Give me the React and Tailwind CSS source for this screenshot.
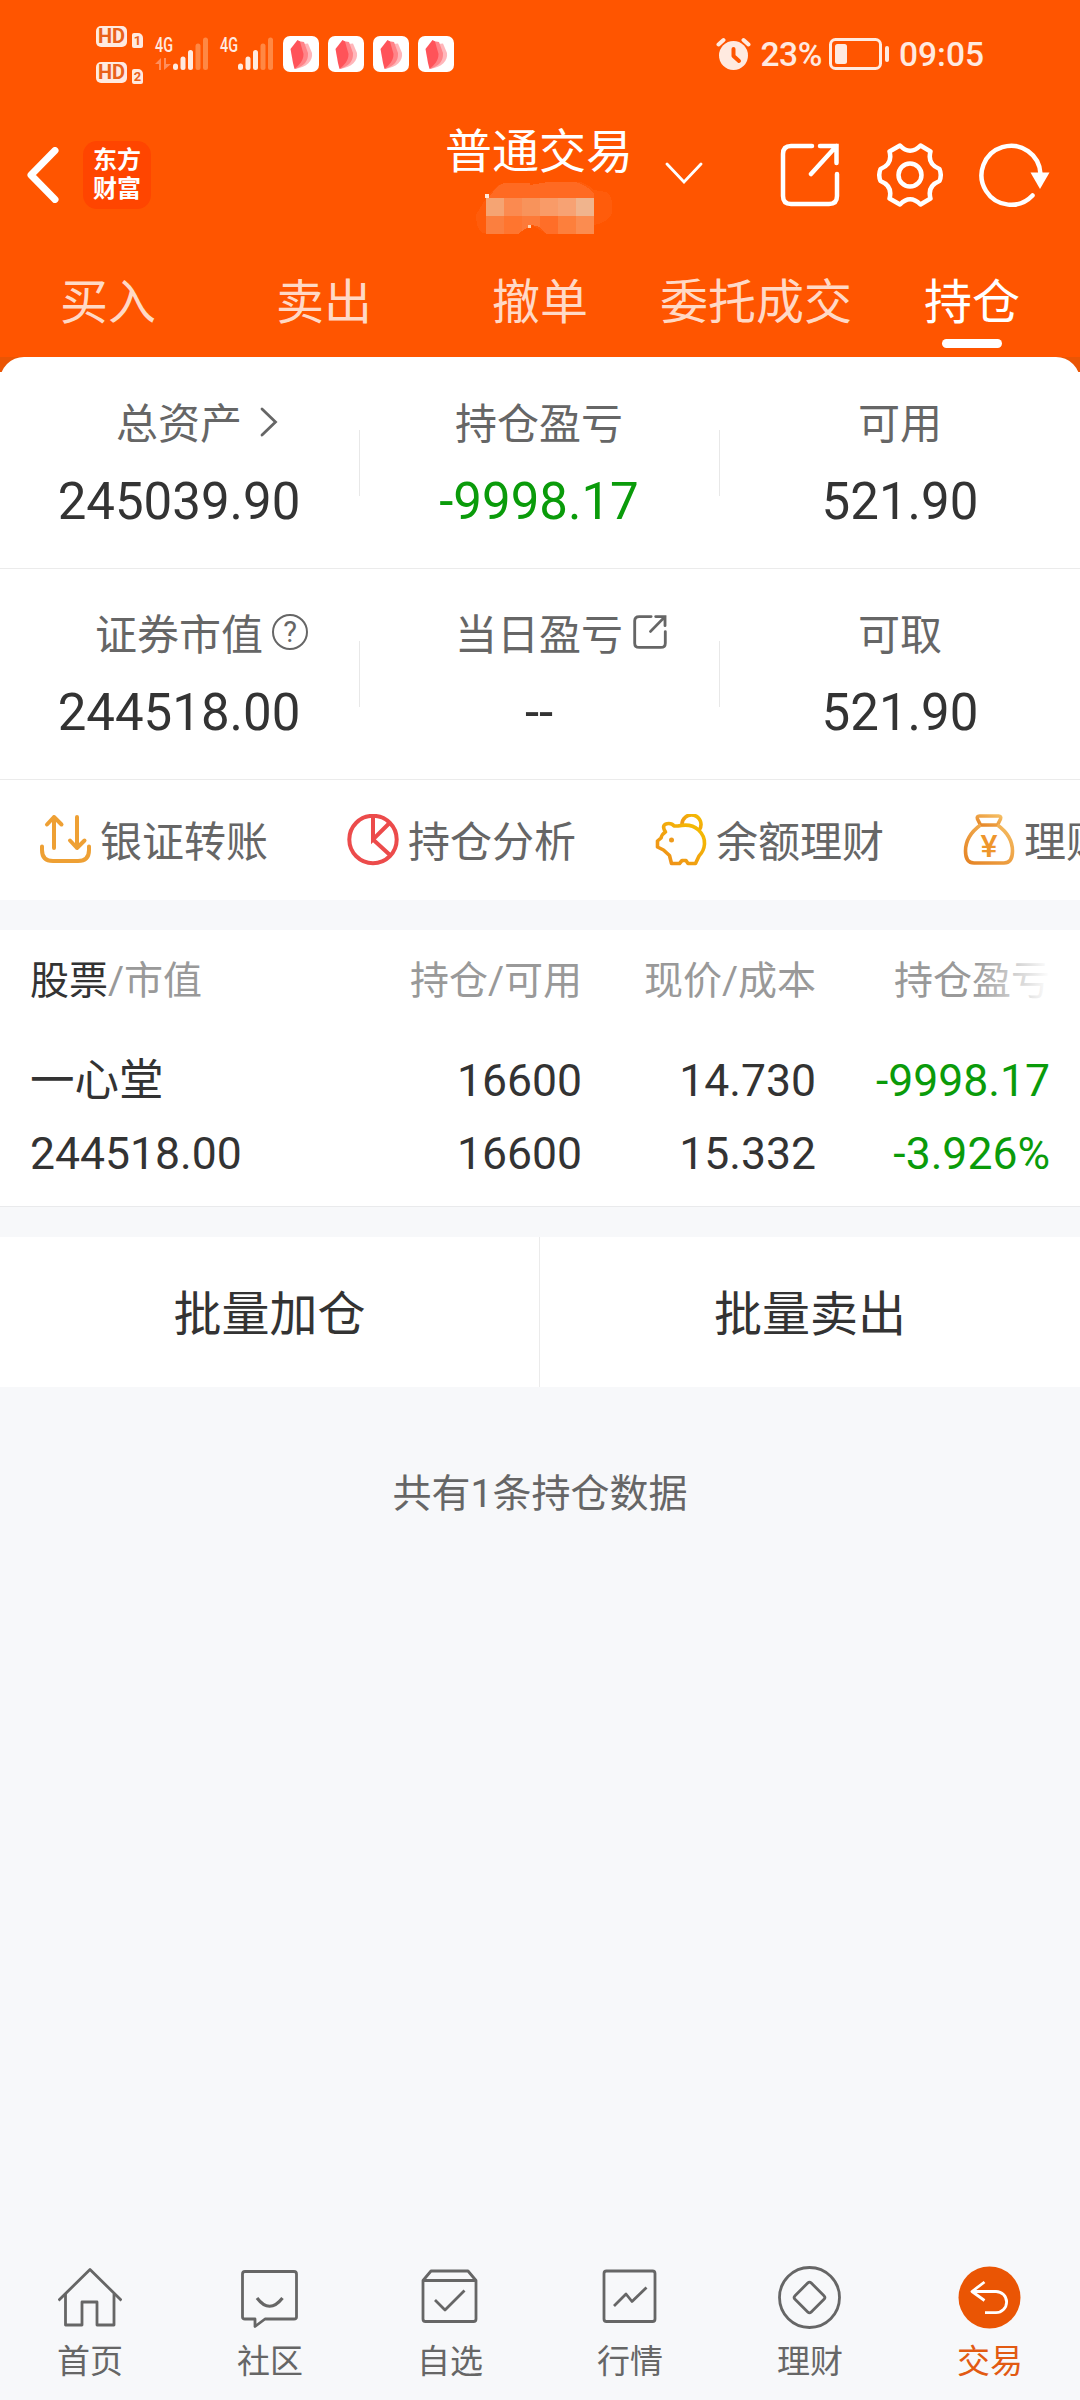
const tabs = ['买入', '卖出', '撤单', '委托成交', '持仓'];

const actions = [
  { label: '银证转账', icon: <TransferIcon /> },
  { label: '持仓分析', icon: <PieIcon /> },
  { label: '余额理财', icon: <PigIcon /> },
  { label: '理财', icon: <BagIcon /> },
];

const holdings = [
  {
    name: '一心堂', value: '244518.00',
    amount: '16600', usable: '16600',
    price: '14.730', cost: '15.332',
    profit: '-9998.17', rate: '-3.926%',
  },
];

/* ---------- status bar ---------- */

function HdBadge({ n }) {
  return (
    <div className="flex gap-[5px] h-[22px]">
      <div className="w-[31px] h-[21px] rounded-[5px] bg-[#ffeae0] text-[#e9611a] text-[20px] leading-[21px] font-bold text-center">HD</div>
      <div className="mt-[7px] w-[11px] h-[15px] rounded-[2px] rounded-tr-[5px] bg-[#ffeae0] text-[#e9611a] text-[13px] leading-[16px] font-bold text-center">{n}</div>
    </div>
  );
}

function Signal({ data }) {
  return (
    <svg className="overflow-visible" width="53" height="34" viewBox="0 0 53 34">
      <text x="0" y="15" fontSize="21" fontWeight="500" textLength="18" lengthAdjust="spacingAndGlyphs" fill="#ffeae0">4G</text>
      {data && <path d="M0 27 L6 21 V33 H4 V27 Z M9 21 H11 V27 H16 L9 33 Z" fill="#ff8f5c" />}
      <g strokeWidth="5" strokeLinecap="round" stroke="#ffeae0">
        <path d="M20.5 29 V30.500" />
        <path d="M28 22 V30.500" />
        <path d="M35.500 15.500 V30.500" />
      </g>
      <g strokeWidth="5" strokeLinecap="round" stroke="#ff8844">
        <path d="M43 9 V30.500" />
        <path d="M50.500 3 V30.500" />
      </g>
    </svg>
  );
}

function ReaderIcon() {
  return (
    <svg width="36" height="36" viewBox="0 0 36 36">
      <rect width="36" height="36" rx="7" fill="#fff" />
      <path d="M20 8 L25 7.500 L29 17 C30 25 24 31 12 33 Z" fill="#ffb6ba" />
      <path d="M15 5 L21 6 L25 17 C25.500 25 21 30 12 33 Z" fill="#ff8489" />
      <path d="M7.500 13 L14.500 4 L17 5.500 L20.500 18 C20.500 25 16 29 11.500 33 L10 27 Z" fill="#ff5359" />
    </svg>
  );
}

function StatusBar() {
  return (
    <div className="h-[108px] flex items-center justify-between pl-[96px] pr-[96px] text-[#ffeae0]">
      <div className="flex items-center">
        <div className="flex flex-col gap-[14px] mr-3 mt-[2px]">
          <HdBadge n="1" />
          <HdBadge n="2" />
        </div>
        <Signal data />
        <div className="w-3" />
        <Signal />
        <div className="flex gap-[9px] ml-[10px]">
          <ReaderIcon /><ReaderIcon /><ReaderIcon /><ReaderIcon />
        </div>
      </div>
      <div className="flex items-center text-[34px] leading-none">
        <svg width="35" height="34" viewBox="0 0 35 34" fill="none" strokeLinecap="round">
          <circle cx="17.500" cy="18.500" r="14.500" fill="currentColor" />
          <path d="M2.500 7.500 L7.500 3 M27.500 3 L32.500 7.500" stroke="currentColor" strokeWidth="4" />
          <path d="M17.500 12 V19 L23 24" stroke="#ff5500" strokeWidth="4" strokeLinejoin="round" />
        </svg>
        <span className="ml-[9px] mt-[2px] text-[33.5px] font-medium tracking-[-0.4px]">23%</span>
        <svg className="ml-[7px]" width="60" height="32" viewBox="0 0 60 32" fill="none">
          <rect x="1.500" y="1.500" width="50" height="29" rx="5" stroke="currentColor" strokeWidth="3" />
          <rect x="6" y="6" width="12" height="20" rx="2.500" fill="currentColor" />
          <rect x="56" y="8" width="4" height="16" rx="2" fill="currentColor" />
        </svg>
        <span className="ml-[10px] mt-[2px] text-[33.5px] font-medium">09:05</span>
      </div>
    </div>
  );
}

/* ---------- header ---------- */

function ShareIcon({ className, stroke }) {
  return (
    <svg className={className} viewBox="0 0 60 64" preserveAspectRatio="none" fill="none" stroke="currentColor" strokeWidth={stroke} strokeLinecap="round">
      <path d="M32 3 H11 Q3 3 3 11 V53 Q3 61 11 61 H49 Q57 61 57 53 V31" />
      <path d="M40 3 H56.500 V20 M56.500 3 L31 31" />
    </svg>
  );
}

// Account number is masked with a coarse mosaic
function MaskedAccount() {
  return (
    <svg width="136" height="54" viewBox="0 0 136 54" shapeRendering="crispEdges">
      <path d="M10 17 L20 6 Q26 1 36 2 L54 4 L72 1 H104 Q112 3 118 9 L130 11 Q136 14 136 24 V32 Q132 42 118 44 V52 H6 Q0 46 0 34 Z" fill="#ff5c0b" />
      <path d="M28 2 H54 V17 H12 L22 5 Z M72 1 H100 Q110 4 118 12 V17 H54 V4 Z" fill="#ff6a22" />
      <rect x="10" y="17" width="18" height="18" fill="#f5a473" />
      <rect x="28" y="17" width="18" height="18" fill="#fb8a50" />
      <rect x="46" y="17" width="18" height="18" fill="#f8935b" />
      <rect x="64" y="17" width="18" height="18" fill="#f99b68" />
      <rect x="82" y="17" width="18" height="18" fill="#f7a273" />
      <rect x="100" y="17" width="18" height="18" fill="#f0b48d" />
      <rect x="10" y="35" width="18" height="18" fill="#fb7f3f" />
      <path d="M28 35 H46 V50 L42 53 H28 Z" fill="#ff752f" />
      <path d="M46 35 H64 V46 L56 44 L46 50 Z" fill="#fd7a38" />
      <path d="M64 35 H82 V53 H71 L64 47 Z" fill="#ff6e28" />
      <rect x="82" y="35" width="18" height="18" fill="#fd7f3c" />
      <rect x="100" y="35" width="18" height="18" fill="#fb8c50" />
      <path d="M42 53 L56 44 L71 53 V54 H42 Z" fill="#ff5500" />
      <rect x="9" y="13" width="4" height="4" fill="#ffe9dc" />
      <rect x="52" y="44" width="3" height="3" fill="#ffd5b0" />
    </svg>
  );
}

function Header() {
  return (
    <div className="h-[134px] flex items-center text-white">
      <svg className="ml-[27px]" width="32" height="56" viewBox="0 0 32 56" fill="none" stroke="currentColor" strokeWidth="7">
        <path d="M28 3.500 L4 28 L28 52.500" strokeLinecap="round" strokeLinejoin="round" />
      </svg>
      <div className="ml-[24px] w-[68px] h-[68px] rounded-[14px] bg-[#ff4500] flex flex-col items-center justify-center text-[24px] leading-[29px] font-bold">
        <span>东方</span>
        <span>财富</span>
      </div>
      <div className="self-start ml-[290px] w-[196px] pt-4 flex flex-col items-center">
        <h1 className="text-[47px] leading-[56px]">普通交易</h1>
        <div className="mt-px ml-[10px]"><MaskedAccount /></div>
      </div>
      <svg className="ml-[28px] mb-1" width="38" height="22" viewBox="0 0 38 22" fill="none" stroke="currentColor" strokeWidth="2.800">
        <path d="M2 2 L19 20 L36 2" strokeLinecap="round" />
      </svg>
      <ShareIcon className="ml-[77px] w-[60px] h-[64px]" stroke="4.5" />
      <svg className="ml-[37px]" width="66" height="64" viewBox="0 0 66 64" fill="none" stroke="currentColor" strokeWidth="4.500" strokeLinejoin="round">
        <path d="M23 2.500 Q33 13 43.500 2.500 L53.500 8.500 Q50 21 62.500 26 Q65 32 62.500 38 Q50 43 53.500 55.500 L43.500 61.500 Q33 51 23 61.500 L12.500 55.500 Q16 43 3.500 38 Q1 32 3.500 26 Q16 21 12.500 8.500 Z" />
        <circle cx="33" cy="32" r="11.500" />
      </svg>
      <svg className="ml-[36px]" width="72" height="64" viewBox="0 0 72 64" fill="none">
        <path d="M61.500 31 A29.500 29.500 0 1 0 53.500 52.500" stroke="currentColor" strokeWidth="4.500" strokeLinecap="round" />
        <path d="M51.500 29.500 H70.500 L61 46 Z" fill="currentColor" />
      </svg>
    </div>
  );
}

function Tabs() {
  return (
    <div className="h-[115px] pt-[37px] grid grid-cols-5 text-[48px] leading-none">
      {tabs.map(t => (
        <div key={t} className={'flex flex-col items-center whitespace-nowrap ' + (t === '持仓' ? 'text-white' : 'text-[#ffd9c6]')}>
          <span>{t}</span>
          {t === '持仓' && <div className="mt-3 w-[60px] h-[9px] rounded-full bg-white" />}
        </div>
      ))}
    </div>
  );
}

/* ---------- assets ---------- */

function Stat({ label, value, icon, green, last }) {
  return (
    <div className={'relative flex flex-col items-center leading-none ' + (last ? '' : 'pr-[2px]')}>
      <div className="relative text-[42px] text-[#666]">
        {label}
        {icon && <span className="absolute left-full top-0">{icon}</span>}
      </div>
      <div className={'mt-[30px] text-[51px] ' + (green ? 'text-[#0a9b0a]' : 'text-[#333]')}>{value}</div>
      {!last && <div className="absolute right-0 top-[26px] w-px h-[66px] bg-[#e8e8e8]" />}
    </div>
  );
}

function Assets() {
  return (
    <div className="bg-white">
      {/* darker strip shows behind the rounded corners */}
      <div className="h-[15px] overflow-hidden bg-[#ea5504]">
        <div className="h-[60px] rounded-t-[24px] bg-white" />
      </div>
      <div className="h-[197px] pt-8 grid grid-cols-3 border-b border-[#ebebeb]">
        <Stat label="总资产" value="245039.90" icon={
          <svg className="ml-[18px] mt-[3px]" width="18" height="30" viewBox="0 0 18 30" fill="none" stroke="#666" strokeWidth="2.800" strokeLinecap="round">
            <path d="M2 2 L15.500 15 L2 28" />
          </svg>
        } />
        <Stat label="持仓盈亏" value="-9998.17" green />
        <Stat label="可用" value="521.90" last />
      </div>
      <div className="h-[211px] pt-[46px] grid grid-cols-3 border-b border-[#ebebeb]">
        <Stat label="证券市值" value="244518.00" icon={
          <span className="block ml-[9px] -mt-px w-[36px] h-[36px] rounded-full border-[2.5px] border-[#666] text-[29px] leading-[33px] text-center">?</span>
        } />
        <Stat label="当日盈亏" value="--" icon={<ShareIcon className="ml-[10px] w-[34px] h-[34px]" stroke="5" />} />
        <Stat label="可取" value="521.90" last />
      </div>
    </div>
  );
}

function TransferIcon() {
  return (
    <svg width="52" height="52" viewBox="0 0 52 52" fill="none" stroke="#eea034" strokeWidth="4" strokeLinecap="round" strokeLinejoin="round">
      <path d="M15 34 V3 M8 10.500 L15 3 L22.500 10.500" />
      <path d="M38 3 V34 M31 26.500 L38 34 L45.500 26.500" />
      <path d="M3 32.500 V36 Q3 47 14 47 H39 Q50 47 50 36 V32.500" />
    </svg>
  );
}

function PieIcon() {
  return (
    <svg width="52" height="52" viewBox="0 0 52 52" fill="none" stroke="#ec4b4b" strokeWidth="4">
      <circle cx="26" cy="25.500" r="23.700" />
      <path d="M26 2 V25.500 L42 9.500 M26 25.500 L43.500 41.500" />
    </svg>
  );
}

function PigIcon() {
  return (
    <svg width="52" height="52" viewBox="0 0 52 52" fill="none" stroke="url(#pig)" strokeWidth="3.600" strokeLinejoin="round" strokeLinecap="round">
      <defs>
        <linearGradient id="pig" x1="1" y1="0" x2="0" y2="1">
          <stop offset="0" stopColor="#f5c000" />
          <stop offset="1" stopColor="#ee8c1c" />
        </linearGradient>
      </defs>
      <path d="M27 11 A9.500 9.500 0 1 1 44.500 15.500" />
      <path d="M23 12 Q36 9 43.500 16 Q50 22 49.500 30 Q49 37 44 42 L40.500 49.500 H33 L31 46.500 H27 L24.500 49.500 H16.500 L14.500 41.500 L8.500 36 L2.500 33 V27 L6 24 Q7 20 10.500 18 Q6 11 12 9.700 Q17 9 19 12 Z" />
      <circle cx="16.500" cy="26" r="2.500" fill="#ee9a1c" stroke="none" />
    </svg>
  );
}

function BagIcon() {
  return (
    <svg width="52" height="52" viewBox="0 0 52 52" fill="none" stroke="url(#bag)" strokeWidth="3.600" strokeLinejoin="round">
      <defs>
        <linearGradient id="bag" x1="1" y1="0" x2="0" y2="1">
          <stop offset="0" stopColor="#f5bd62" />
          <stop offset="1" stopColor="#e58324" />
        </linearGradient>
      </defs>
      <path d="M17.500 11 L14.500 5 Q13.500 2 16.500 2 H35.500 Q38.500 2 37.500 5 L34.500 11 Z" />
      <path d="M17.500 11 Q2.500 22 2.500 37 Q2.500 49 11 49 H41 Q49.500 49 49.500 37 Q49.500 22 34.500 11" />
      <text x="26" y="42.500" fontSize="32" fontWeight="500" textAnchor="middle" fill="#ee962c" stroke="none">¥</text>
    </svg>
  );
}

function Actions() {
  return (
    <div className="h-[120px] pl-[39px] flex items-center overflow-hidden bg-white">
      {actions.map(a => (
        <div key={a.label} className="w-[308px] shrink-0 flex items-center whitespace-nowrap">
          {a.icon}
          <span className="ml-[9px] mt-[5px] text-[42px] leading-none text-[#666]">{a.label}</span>
        </div>
      ))}
    </div>
  );
}

/* ---------- holdings ---------- */

function Holdings() {
  return (
    <div className="bg-white px-[30px] pt-8 pb-[29px] border-b border-[#e9eaec] leading-none text-[#333]">
      <div className="grid grid-cols-[318px_234px_234px_234px] text-right text-[39px] text-[#999]">
        <div className="text-left"><span className="text-[#333]">股票</span>/市值</div>
        <div>持仓/可用</div>
        <div>现价/成本</div>
        <div className="relative">
          持仓盈亏
          <div className="absolute right-0 top-0 w-[76px] h-full bg-gradient-to-r from-white/0 to-white" />
        </div>
      </div>
      {holdings.map(h => (
        <div key={h.name} className="mt-[58px] grid grid-cols-[318px_234px_234px_234px] auto-rows-[45px] gap-y-[28px] text-right text-[44.5px] leading-[45px]">
          <div className="text-left">{h.name}</div>
          <div>{h.amount}</div>
          <div>{h.price}</div>
          <div className="text-[#0a9b0a]">{h.profit}</div>
          <div className="text-left">{h.value}</div>
          <div>{h.usable}</div>
          <div>{h.cost}</div>
          <div className="text-[#0a9b0a]">{h.rate}</div>
        </div>
      ))}
    </div>
  );
}

/* ---------- bottom navigation ---------- */

function NavItem({ label, active, children }) {
  return (
    <div className={'flex flex-col items-center ' + (active ? 'text-[#e25a12]' : 'text-[#666]')}>
      <svg width="64" height="66" viewBox="0 0 64 66" fill="none" stroke="currentColor" strokeWidth="2.800" strokeLinejoin="round">
        {children}
      </svg>
      <span className="mt-[15px] text-[33px] leading-none">{label}</span>
    </div>
  );
}

function BottomNav() {
  return (
    <div className="mt-auto h-[136px] grid grid-cols-6">
      <NavItem label="首页">
        <path d="M0.500 36.500 L32 5.500 L63.500 36.500" />
        <path d="M7.500 30 V61 H24 V38 H39 V61 H56 V30" />
      </NavItem>
      <NavItem label="社区">
        <path d="M7 7.500 H56 Q58.500 7.500 58.500 10 V53 Q58.500 55 56 55 H27 L17 62.500 V55 H7 Q4.500 55 4.500 53 V10 Q4.500 7.500 7 7.500 Z" />
        <path d="M19 34 Q31.500 50.500 44.500 34" strokeWidth="3.200" />
      </NavItem>
      <NavItem label="自选">
        <path d="M5 16.500 L13 7 H50 L58 16.500 V55 Q58 57.500 55.500 57.500 H7.500 Q5 57.500 5 55 Z M5 16.500 H58" />
        <path d="M17 36 L27 46 L46.500 26.500" />
      </NavItem>
      <NavItem label="行情">
        <rect x="6" y="7" width="51" height="50.500" rx="2.500" />
        <path d="M16 42 L28 30 L34 37.500 L48.500 23.500" />
      </NavItem>
      <NavItem label="理财">
        <circle cx="31.500" cy="33.500" r="30" />
        <rect x="20" y="22" width="23" height="23" rx="2.500" transform="rotate(45 31.500 33.500)" />
      </NavItem>
      <NavItem label="交易" active>
        <circle cx="31.500" cy="33.500" r="31" fill="#ea5504" stroke="none" />
        <path d="M26.500 18 L14 27.500 L26.500 36.500 M14 27.500 H38 A10.600 10.600 0 0 1 38 48.700 H27" stroke="#fff" />
      </NavItem>
    </div>
  );
}

export default function App() {
  return (
    <div className="w-[1080px] h-[2400px] flex flex-col overflow-hidden bg-[#f7f8fa] font-['Roboto','Noto_Sans_CJK_SC',sans-serif]">
      <div className="bg-[#ff5500]">
        <StatusBar />
        <Header />
        <Tabs />
      </div>
      <Assets />
      <Actions />
      <div className="h-[30px]" />
      <Holdings />
      <div className="h-[30px]" />
      <div className="h-[150px] grid grid-cols-2 bg-white text-[48px] text-[#333]">
        <button className="pt-[6px] border-r border-[#ebebeb]">批量加仓</button>
        <button className="pt-[6px]">批量卖出</button>
      </div>
      <p className="mt-[88px] text-center text-[39px] leading-none text-[#666]">共有1条持仓数据</p>
      <BottomNav />
    </div>
  );
}
